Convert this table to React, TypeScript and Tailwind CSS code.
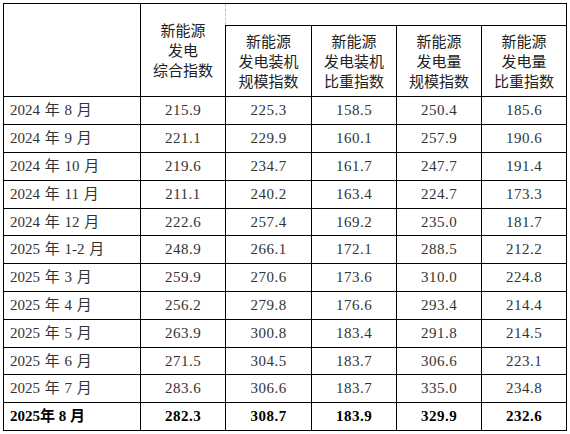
// 新能源发电指数表 —— 月度数据
const rows: { label: string; v: string[]; h: string }[] = [
  { label: "2024 年 8 月", v: ["215.9", "225.3", "158.5", "250.4", "185.6"], h: "h-[28px]" },
  { label: "2024 年 9 月", v: ["221.1", "229.9", "160.1", "257.9", "190.6"], h: "h-[28px]" },
  { label: "2024 年 10 月", v: ["219.6", "234.7", "161.7", "247.7", "191.4"], h: "h-[28px]" },
  { label: "2024 年 11 月", v: ["211.1", "240.2", "163.4", "224.7", "173.3"], h: "h-[28px]" },
  { label: "2024 年 12 月", v: ["222.6", "257.4", "169.2", "235.0", "181.7"], h: "h-[27px]" },
  { label: "2025 年 1-2 月", v: ["248.9", "266.1", "172.1", "288.5", "212.2"], h: "h-[28px]" },
  { label: "2025 年 3 月", v: ["259.9", "270.6", "173.6", "310.0", "224.8"], h: "h-[28px]" },
  { label: "2025 年 4 月", v: ["256.2", "279.8", "176.6", "293.4", "214.4"], h: "h-[28px]" },
  { label: "2025 年 5 月", v: ["263.9", "300.8", "183.4", "291.8", "214.5"], h: "h-[28px]" },
  { label: "2025 年 6 月", v: ["271.5", "304.5", "183.7", "306.6", "223.1"], h: "h-[27px]" },
  { label: "2025 年 7 月", v: ["283.6", "306.6", "183.7", "335.0", "234.8"], h: "h-[28px]" },
]

const widths = ["w-[85px]", "w-[86px]", "w-[85px]", "w-[85px]", "w-[85px]"]

const subHeads = [
  ["新能源", "发电装机", "规模指数"],
  ["新能源", "发电装机", "比重指数"],
  ["新能源", "发电量", "规模指数"],
  ["新能源", "发电量", "比重指数"],
]

const serif = "font-['Liberation_Serif','Noto_Sans_CJK_SC',serif]"
const sans = "font-['Noto_Sans_CJK_SC','Noto_Sans',sans-serif]"

export default function App() {
  return (
    <div className="h-[434px] w-[570px] bg-white pl-[3px] pt-[3px]">
      <div className="w-[564px] border-l border-t border-black">
        {/* 表头 */}
        <div className={`flex h-[93px] border-b border-black text-[15px] leading-[20px] text-[#222] ${sans}`}>
          <div className="w-[137px] border-r border-black" />
          <div className="flex w-[84px] flex-col items-center justify-center pb-px">
            <span>新能源</span>
            <span>发电</span>
            <span>综合指数</span>
          </div>
          <div className="flex flex-1 flex-col">
            <div className="flex h-[22px] border-b border-r border-black">
              <div className="h-full w-0 border-l border-dashed border-[#c4c4c4]" />
            </div>
            <div className="flex flex-1">
              {subHeads.map((h, i) => (
                <div
                  key={i}
                  className={`flex flex-col items-center justify-center border-l border-black ${i === 3 ? "w-[86px] border-r" : i === 0 ? "w-[86px]" : "w-[85px]"}`}
                >
                  {h.map((t) => (
                    <span key={t}>{t}</span>
                  ))}
                </div>
              ))}
            </div>
          </div>
        </div>

        {/* 数据 */}
        {rows.map((r) => (
          <div key={r.label} className={`flex ${r.h} border-b border-black text-[15px] text-[#333] ${serif}`}>
            <div className="flex w-[137px] items-center border-r border-black pl-[6px] [word-spacing:1px]">{r.label}</div>
            {r.v.map((x, i) => (
              <div key={i} className={`flex ${widths[i]} items-center justify-center border-r border-black tracking-[0.5px]`}>
                {x}
              </div>
            ))}
          </div>
        ))}

        <div className={`flex h-[28px] border-b border-black text-[15px] font-bold text-black ${serif}`}>
          <div className="flex w-[137px] items-center border-r border-black pl-[6px]">2025年 8 月</div>
          {["282.3", "308.7", "183.9", "329.9", "232.6"].map((x, i) => (
            <div key={i} className={`flex ${widths[i]} items-center justify-center border-r border-black tracking-[0.5px]`}>
              {x}
            </div>
          ))}
        </div>
      </div>
    </div>
  )
}
